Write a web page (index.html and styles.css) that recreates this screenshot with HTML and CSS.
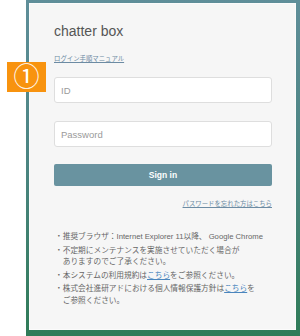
FILE: index.html
```html
<!DOCTYPE html>
<html lang="ja">
<head>
<meta charset="utf-8">
<title>chatter box</title>
<link rel="stylesheet" href="styles.css">
</head>
<body>

<div class="badge">①</div>

<div class="frame">
  <div class="card">
    <h1 class="title">chatter box</h1>
    <a class="manual" href="#">ログイン手順マニュアル</a>

    <input type="text" class="field field-id" placeholder="ID">
    <input type="password" class="field field-pwd" placeholder="Password">
    <button class="signin">Sign in</button>

    <div class="forgot"><a href="#">パスワードを忘れた方はこちら</a></div>

    <ul class="notes">
      <li>・推奨ブラウザ：Internet Explorer 11以降、 Google Chrome</li>
      <li>・不定期にメンテナンスを実施させていただく場合が<br>ありますのでご了承ください。</li>
      <li>・本システムの利用規約は<a href="#">こちら</a>をご参照ください。</li>
      <li>・株式会社進研アドにおける個人情報保護方針は<a href="#">こちら</a>を<br>ご参照ください。</li>
    </ul>
  </div>
</div>

</body>
</html>
```

FILE: styles.css
```css
body { margin: 0; background: #fff; font-family: "Liberation Sans", "Noto Sans CJK JP", sans-serif; color: #666; }

.frame { margin-left: 26px; height: 336px; box-sizing: border-box; padding: 3px 4px 6px 3px;
  background: linear-gradient(#5f8e99, #4a8480 50%, #2f7b57); }

.card { height: 100%; box-sizing: border-box; background: #f6f6f6; border: 1px solid #fbfbfb;
  padding: 0 23px 0 24px; display: flex; flex-direction: column; align-items: stretch; }

.badge { position: absolute; left: 7px; top: 62px; width: 39px; height: 30px;
  background: #f8930f; color: #fff; font-size: 26px; line-height: 30px; text-align: center; }

.title { margin: 19px 0 0 0; font-size: 14px; line-height: 16px; font-weight: normal; color: #555; }

.manual { margin-top: 15px; font-size: 6.4px; line-height: 10px; color: #6c8ba3; align-self: flex-start; }

.field { height: 26px; box-sizing: border-box; border: 1px solid #dedede; border-radius: 3px;
  background: #fff; padding: 0 6px; font: 9.5px "Liberation Sans", sans-serif; color: #333; outline: 0; }
.field::placeholder { color: #9a9a9a; }
.field-id { margin-top: 13px; }
.field-pwd { margin-top: 18px; }

.signin { margin-top: 17px; height: 22px; border: 0; border-radius: 2px; background: #6993a0;
  color: #fff; font: bold 8.5px "Liberation Sans", sans-serif; }

.forgot { margin-top: 13px; text-align: right; font-size: 6.4px; line-height: 10px; }
.forgot a { color: #6c8ba3; }

.notes { list-style: none; margin: 22px 0 0 1px; padding: 0; font-size: 7.7px; line-height: 11.5px; color: #666; }
.notes li { margin-bottom: 2px; padding-left: 1em; text-indent: -1em; }
.notes a { color: #4a85bd; }
```
